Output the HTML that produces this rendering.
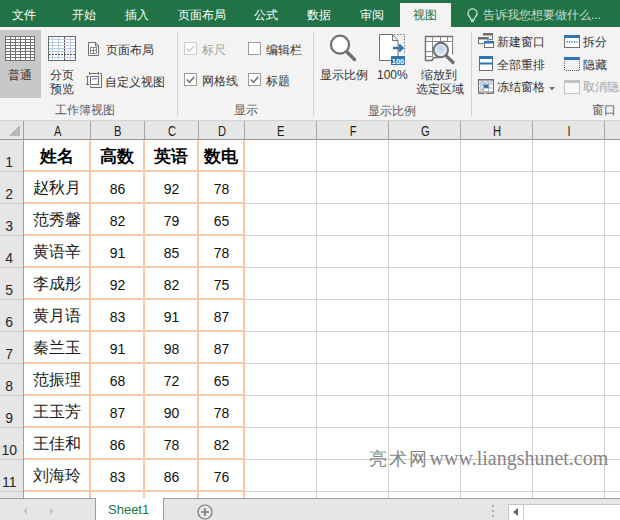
<!DOCTYPE html><html><head><meta charset="utf-8"><style>
*{margin:0;padding:0;box-sizing:border-box}
html,body{width:620px;height:520px;overflow:hidden;background:#fff;font-family:"Liberation Sans",sans-serif;position:relative}
.abs{position:absolute;white-space:nowrap}
svg{position:absolute;overflow:visible}
.tab{position:absolute;top:8px;font-size:12px;color:#fff;line-height:14px;white-space:nowrap}
.rl{position:absolute;font-size:12px;color:#333;line-height:14px;white-space:nowrap}
.gl{position:absolute;font-size:12px;color:#5e5e5e;line-height:14px;white-space:nowrap}
.sep{position:absolute;top:32px;width:1px;height:84px;background:#d2d2d2}
.cb{position:absolute;width:13px;height:13px;border:1px solid #9c9c9c;background:#fff}
.cell{position:absolute;text-align:center;line-height:32px;color:#000}
</style></head><body>
<div class="abs" style="left:0;top:0;width:620px;height:27px;background:#217346"></div>
<div class="tab" style="left:12px">文件</div>
<div class="tab" style="left:72px">开始</div>
<div class="tab" style="left:125px">插入</div>
<div class="tab" style="left:178px">页面布局</div>
<div class="tab" style="left:254px">公式</div>
<div class="tab" style="left:307px">数据</div>
<div class="tab" style="left:360px">审阅</div>
<div class="abs" style="left:400px;top:3px;width:51px;height:25px;background:#f3f3f3"></div>
<div class="tab" style="left:413px;color:#217346">视图</div>
<svg style="left:467px;top:8px" width="11" height="14" viewBox="0 0 11 14"><path d="M5.5 0.8a4.6 4.6 0 0 0-2.8 8.2c.5.4.8 1 .8 1.6v.6h4v-.6c0-.6.3-1.2.8-1.6A4.6 4.6 0 0 0 5.5 0.8z" fill="none" stroke="#cfe2d6" stroke-width="1.1"/><path d="M3.6 12.3h3.8M4 13.6h3" stroke="#cfe2d6" stroke-width="1"/></svg>
<div class="tab" style="left:483px;color:#c9ddd0">告诉我您想要做什么...</div>
<div class="abs" style="left:0;top:27px;width:620px;height:93px;background:#f3f3f3"></div>
<div class="abs" style="left:0;top:30px;width:41px;height:68px;background:#c8c8c8"></div>
<svg style="left:5px;top:36px" width="30" height="25"><rect x="0" y="0" width="30" height="25" fill="#707070"/><rect x="1" y="1" width="4" height="2" fill="#fff"/><rect x="1" y="4" width="4" height="2" fill="#fff"/><rect x="1" y="7" width="4" height="2" fill="#fff"/><rect x="1" y="10" width="4" height="2" fill="#fff"/><rect x="1" y="13" width="4" height="2" fill="#fff"/><rect x="1" y="16" width="4" height="2" fill="#fff"/><rect x="1" y="19" width="4" height="2" fill="#fff"/><rect x="1" y="22" width="4" height="2" fill="#fff"/><rect x="6" y="1" width="4" height="2" fill="#fff"/><rect x="6" y="4" width="4" height="2" fill="#fff"/><rect x="6" y="7" width="4" height="2" fill="#fff"/><rect x="6" y="10" width="4" height="2" fill="#fff"/><rect x="6" y="13" width="4" height="2" fill="#fff"/><rect x="6" y="16" width="4" height="2" fill="#fff"/><rect x="6" y="19" width="4" height="2" fill="#fff"/><rect x="6" y="22" width="4" height="2" fill="#fff"/><rect x="11" y="1" width="4" height="2" fill="#fff"/><rect x="11" y="4" width="4" height="2" fill="#fff"/><rect x="11" y="7" width="4" height="2" fill="#fff"/><rect x="11" y="10" width="4" height="2" fill="#fff"/><rect x="11" y="13" width="4" height="2" fill="#fff"/><rect x="11" y="16" width="4" height="2" fill="#fff"/><rect x="11" y="19" width="4" height="2" fill="#fff"/><rect x="11" y="22" width="4" height="2" fill="#fff"/><rect x="16" y="1" width="4" height="2" fill="#fff"/><rect x="16" y="4" width="4" height="2" fill="#fff"/><rect x="16" y="7" width="4" height="2" fill="#fff"/><rect x="16" y="10" width="4" height="2" fill="#fff"/><rect x="16" y="13" width="4" height="2" fill="#fff"/><rect x="16" y="16" width="4" height="2" fill="#fff"/><rect x="16" y="19" width="4" height="2" fill="#fff"/><rect x="16" y="22" width="4" height="2" fill="#fff"/><rect x="21" y="1" width="4" height="2" fill="#fff"/><rect x="21" y="4" width="4" height="2" fill="#fff"/><rect x="21" y="7" width="4" height="2" fill="#fff"/><rect x="21" y="10" width="4" height="2" fill="#fff"/><rect x="21" y="13" width="4" height="2" fill="#fff"/><rect x="21" y="16" width="4" height="2" fill="#fff"/><rect x="21" y="19" width="4" height="2" fill="#fff"/><rect x="21" y="22" width="4" height="2" fill="#fff"/><rect x="26" y="1" width="3" height="2" fill="#fff"/><rect x="26" y="4" width="3" height="2" fill="#fff"/><rect x="26" y="7" width="3" height="2" fill="#fff"/><rect x="26" y="10" width="3" height="2" fill="#fff"/><rect x="26" y="13" width="3" height="2" fill="#fff"/><rect x="26" y="16" width="3" height="2" fill="#fff"/><rect x="26" y="19" width="3" height="2" fill="#fff"/><rect x="26" y="22" width="3" height="2" fill="#fff"/></svg>
<svg style="left:48px;top:36px" width="28" height="25"><rect x="0.5" y="0.5" width="27" height="24" fill="#fff" stroke="#6a6a6a"/><line x1="1" y1="3.5" x2="27" y2="3.5" stroke="#bccbe6"/><line x1="1" y1="6.5" x2="27" y2="6.5" stroke="#bccbe6"/><line x1="1" y1="9.5" x2="27" y2="9.5" stroke="#bccbe6"/><line x1="1" y1="12.5" x2="27" y2="12.5" stroke="#bccbe6"/><line x1="1" y1="15.5" x2="27" y2="15.5" stroke="#bccbe6"/><line x1="1" y1="21.5" x2="27" y2="21.5" stroke="#bccbe6"/><line x1="4.5" y1="1" x2="4.5" y2="24" stroke="#bccbe6"/><line x1="10.5" y1="1" x2="10.5" y2="24" stroke="#bccbe6"/><line x1="22.5" y1="1" x2="22.5" y2="24" stroke="#bccbe6"/><line x1="16.5" y1="1" x2="16.5" y2="24" stroke="#555" stroke-dasharray="2 1"/><line x1="1" y1="18.5" x2="27" y2="18.5" stroke="#555" stroke-dasharray="2 1"/></svg>
<div class="rl" style="left:8px;top:68px">普通</div>
<div class="rl" style="left:50px;top:68px">分页</div>
<div class="rl" style="left:50px;top:82px">预览</div>
<svg style="left:88px;top:42px" width="11" height="14"><path d="M0.5 0.5h7l3 3.5v9.5h-10z" fill="#fff" stroke="#6f6f6f"/><path d="M7.5 0.5v3.5h3" fill="none" stroke="#6f6f6f"/><rect x="2.5" y="5.5" width="6" height="6" fill="none" stroke="#8a8a8a"/><path d="M5.5 5.5v6M2.5 8.5h6" stroke="#8a8a8a"/></svg>
<div class="rl" style="left:106px;top:43px">页面布局</div>
<svg style="left:86px;top:72px" width="17" height="17"><path d="M3.5 0v3M3.5 1.5h9M12.5 0v3M0 4.5h3M1.5 4.5v8M0 12.5h3" stroke="#6f6f6f" fill="none"/><rect x="4.5" y="4.5" width="8" height="8" fill="#fff" stroke="#6f6f6f"/><rect x="6" y="6" width="5" height="1.6" fill="#8fb0da"/><path d="M14 1.5h1.5v14h-11v-1.5" stroke="#6f6f6f" fill="none"/></svg>
<div class="rl" style="left:105px;top:75px">自定义视图</div>
<div class="gl" style="left:55px;top:103px">工作簿视图</div>
<div class="sep" style="left:177px"></div>
<div class="cb" style="left:184px;top:42px;border-color:#cdcdcd"></div>
<svg style="left:184px;top:42px" width="13" height="13"><path d="M2.8 6.6l2.6 2.7 5-5.6" fill="none" stroke="#cdcdcd" stroke-width="1.5"/></svg>
<div class="rl" style="left:202px;top:43px;color:#9e9e9e">标尺</div>
<div class="cb" style="left:248px;top:42px"></div>
<div class="rl" style="left:266px;top:43px">编辑栏</div>
<div class="cb" style="left:184px;top:73px"></div>
<svg style="left:184px;top:73px" width="13" height="13"><path d="M2.8 6.6l2.6 2.7 5-5.6" fill="none" stroke="#707070" stroke-width="1.5"/></svg>
<div class="rl" style="left:202px;top:74px">网格线</div>
<div class="cb" style="left:248px;top:73px"></div>
<svg style="left:248px;top:73px" width="13" height="13"><path d="M2.8 6.6l2.6 2.7 5-5.6" fill="none" stroke="#707070" stroke-width="1.5"/></svg>
<div class="rl" style="left:266px;top:74px">标题</div>
<div class="gl" style="left:234px;top:103px">显示</div>
<div class="sep" style="left:313px"></div>
<svg style="left:328px;top:33px" width="31" height="30"><circle cx="12" cy="11.7" r="9" fill="#fff" stroke="#6f6f6f" stroke-width="2.2"/><path d="M19 19l7.5 7.5" stroke="#6f6f6f" stroke-width="3.4" stroke-linecap="round"/></svg>
<div class="rl" style="left:320px;top:68px">显示比例</div>
<svg style="left:379px;top:34px" width="27" height="31"><path d="M0.5 0.5h13l5.5 6v20h-18.5z" fill="#fff" stroke="#6f6f6f"/><path d="M13.5 0.5v6h5.5" fill="none" stroke="#6f6f6f"/><path d="M15 0.5h10.5v20" fill="none" stroke="#777" stroke-dasharray="1.5 1.5"/><path d="M14 14h9M20 10.5l3.5 3.5-3.5 3.5" fill="none" stroke="#2e75b6" stroke-width="2.4"/><rect x="12" y="22" width="14" height="9" fill="#2e75b6"/><text x="19" y="29.5" font-size="7.5" fill="#fff" text-anchor="middle" font-family="Liberation Sans" font-weight="bold">100</text></svg>
<div class="rl" style="left:377px;top:68px">100%</div>
<svg style="left:425px;top:36px" width="31" height="28"><path d="M0.5 0.5h27v18M0.5 0.5v24h6l2-3h6" fill="#fff" stroke="#6f6f6f" stroke-width="1.2"/><rect x="1" y="1" width="26" height="20" fill="#fff"/><path d="M0.5 0.5h27.5M0.5 0.5v24.5M0.5 24.5h6.5l2-3h5" fill="none" stroke="#6f6f6f" stroke-width="1.3"/><path d="M1 5.5h26M1 15.5h6M1 20.5h6M7.5 1v20M15.5 1v4M22.5 1v4M27.5 1v13" stroke="#8a8a8a"/><defs><radialGradient id="zg" cx="0.5" cy="0.4" r="0.6"><stop offset="0" stop-color="#b7cde6"/><stop offset="1" stop-color="#f4f8fc"/></radialGradient></defs><circle cx="15.8" cy="14" r="7.2" fill="url(#zg)" stroke="#6f6f6f" stroke-width="2"/><path d="M21 19.5l7 7" stroke="#6f6f6f" stroke-width="3.2" stroke-linecap="round"/></svg>
<div class="rl" style="left:421px;top:68px">缩放到</div>
<div class="rl" style="left:416px;top:82px">选定区域</div>
<div class="gl" style="left:368px;top:104px">显示比例</div>
<div class="sep" style="left:471px"></div>
<svg style="left:478px;top:33px" width="16" height="15"><rect x="5" y="0" width="10" height="2.5" fill="#6f6f6f"/><path d="M14.5 2.5v4h-3.5" fill="none" stroke="#6f6f6f"/><rect x="0.5" y="4.5" width="9.5" height="6" fill="#fff" stroke="#6f6f6f"/><rect x="0" y="4" width="10.5" height="2.5" fill="#6f6f6f"/><rect x="6.5" y="8.5" width="9" height="6" fill="#fff" stroke="#6f6f6f"/><rect x="6" y="8" width="10" height="2.5" fill="#2e75b6"/></svg>
<div class="rl" style="left:497px;top:35px">新建窗口</div>
<svg style="left:479px;top:56px" width="14" height="15"><rect x="0.5" y="0.5" width="13" height="14" fill="#fff" stroke="#6f6f6f"/><rect x="0" y="0" width="14" height="3" fill="#2e75b6"/><rect x="0" y="6.5" width="14" height="2" fill="#2e75b6"/></svg>
<div class="rl" style="left:497px;top:58px">全部重排</div>
<svg style="left:478px;top:79px" width="16" height="15"><rect x="0.5" y="0.5" width="15" height="12.5" fill="#fff" stroke="#6f6f6f"/><rect x="0" y="0" width="16" height="1.6" fill="#6f6f6f"/><path d="M5.5 1v12M10.5 1v12M1 5h14M1 9h14" stroke="#b4b4b4"/><path d="M0.5 13v1.5h6M8.5 14.5h7v-1.5" fill="none" stroke="#6f6f6f"/><path d="M1.8 4.2q1.5 -1.6 3.2 -1.4" stroke="#7fa6d6" fill="none" stroke-width="1.1"/><path d="M6.8 4.2q1.5 -1.6 3.2 -1.4" stroke="#7fa6d6" fill="none" stroke-width="1.1"/><path d="M11.8 4.2q1.5 -1.6 3.2 -1.4" stroke="#7fa6d6" fill="none" stroke-width="1.1"/><path d="M1.8 7.7q1.5 -1.6 3.2 -1.4" stroke="#7fa6d6" fill="none" stroke-width="1.1"/><path d="M1.8 11.7q1.5 -1.6 3.2 -1.4" stroke="#7fa6d6" fill="none" stroke-width="1.1"/><rect x="6" y="5.5" width="4.5" height="3.5" fill="#2e75b6"/></svg>
<div class="rl" style="left:497px;top:80px">冻结窗格</div>
<svg style="left:549px;top:87px" width="7" height="4"><path d="M0 0h6l-3 3.5z" fill="#777"/></svg>
<svg style="left:564px;top:35px" width="16" height="13"><rect x="0.5" y="0.5" width="15" height="12" fill="#fff" stroke="#6f6f6f"/><rect x="0" y="0" width="16" height="3" fill="#2e75b6"/><path d="M2.5 7h11" stroke="#2e75b6" stroke-width="1.3" stroke-dasharray="1.3 1.2"/></svg>
<div class="rl" style="left:583px;top:35px">拆分</div>
<svg style="left:564px;top:57px" width="16" height="14"><rect x="0" y="0" width="16" height="3" fill="#2e75b6"/><rect x="0" y="4" width="1" height="1" fill="#555"/><rect x="15" y="4" width="1" height="1" fill="#555"/><rect x="0" y="6" width="1" height="1" fill="#555"/><rect x="15" y="6" width="1" height="1" fill="#555"/><rect x="0" y="8" width="1" height="1" fill="#555"/><rect x="15" y="8" width="1" height="1" fill="#555"/><rect x="0" y="10" width="1" height="1" fill="#555"/><rect x="15" y="10" width="1" height="1" fill="#555"/><rect x="0" y="12" width="1" height="1" fill="#555"/><rect x="15" y="12" width="1" height="1" fill="#555"/><rect x="2" y="13" width="1" height="1" fill="#555"/><rect x="4" y="13" width="1" height="1" fill="#555"/><rect x="6" y="13" width="1" height="1" fill="#555"/><rect x="8" y="13" width="1" height="1" fill="#555"/><rect x="10" y="13" width="1" height="1" fill="#555"/><rect x="12" y="13" width="1" height="1" fill="#555"/><rect x="14" y="13" width="1" height="1" fill="#555"/></svg>
<div class="rl" style="left:583px;top:58px">隐藏</div>
<svg style="left:564px;top:80px" width="16" height="14"><rect x="0.5" y="0.5" width="15" height="13" fill="#f8f8f8" stroke="#c4c4c4"/><rect x="0" y="0" width="16" height="3" fill="#c4c4c4"/></svg>
<div class="rl" style="left:583px;top:80px;color:#a4a4a4">取消隐藏</div>
<div class="gl" style="left:592px;top:103px">窗口</div>
<div class="abs" style="left:0;top:120px;width:620px;height:20px;background:#e6e6e6;border-top:1px solid #d4d4d4"></div>
<div class="abs" style="left:0;top:139px;width:620px;height:1px;background:#979797"></div>
<div class="abs" style="left:0;top:140px;width:23px;height:358px;background:#e6e6e6"></div>
<div class="abs" style="left:23px;top:121px;width:1px;height:377px;background:#a0a0a0"></div>
<svg style="left:9px;top:125px" width="12" height="11"><path d="M11 0v11h-11z" fill="#b7b7b7"/></svg>
<div class="abs" style="left:90px;top:121px;width:1px;height:18px;background:#a6a6a6"></div>
<div class="abs" style="left:90px;top:140px;width:1px;height:358px;background:#d2d2d2"></div>
<div class="abs" style="left:24px;top:122px;width:67px;text-align:center;font-size:14px;line-height:18px;color:#1e1e1e"><span style="display:inline-block;transform:scaleX(.8)">A</span></div>
<div class="abs" style="left:144px;top:121px;width:1px;height:18px;background:#a6a6a6"></div>
<div class="abs" style="left:144px;top:140px;width:1px;height:358px;background:#d2d2d2"></div>
<div class="abs" style="left:91px;top:122px;width:54px;text-align:center;font-size:14px;line-height:18px;color:#1e1e1e"><span style="display:inline-block;transform:scaleX(.8)">B</span></div>
<div class="abs" style="left:198px;top:121px;width:1px;height:18px;background:#a6a6a6"></div>
<div class="abs" style="left:198px;top:140px;width:1px;height:358px;background:#d2d2d2"></div>
<div class="abs" style="left:145px;top:122px;width:54px;text-align:center;font-size:14px;line-height:18px;color:#1e1e1e"><span style="display:inline-block;transform:scaleX(.8)">C</span></div>
<div class="abs" style="left:244px;top:121px;width:1px;height:18px;background:#a6a6a6"></div>
<div class="abs" style="left:244px;top:140px;width:1px;height:358px;background:#d2d2d2"></div>
<div class="abs" style="left:199px;top:122px;width:46px;text-align:center;font-size:14px;line-height:18px;color:#1e1e1e"><span style="display:inline-block;transform:scaleX(.8)">D</span></div>
<div class="abs" style="left:316px;top:121px;width:1px;height:18px;background:#a6a6a6"></div>
<div class="abs" style="left:316px;top:140px;width:1px;height:358px;background:#d2d2d2"></div>
<div class="abs" style="left:245px;top:122px;width:72px;text-align:center;font-size:14px;line-height:18px;color:#1e1e1e"><span style="display:inline-block;transform:scaleX(.8)">E</span></div>
<div class="abs" style="left:388px;top:121px;width:1px;height:18px;background:#a6a6a6"></div>
<div class="abs" style="left:388px;top:140px;width:1px;height:358px;background:#d2d2d2"></div>
<div class="abs" style="left:317px;top:122px;width:72px;text-align:center;font-size:14px;line-height:18px;color:#1e1e1e"><span style="display:inline-block;transform:scaleX(.8)">F</span></div>
<div class="abs" style="left:460px;top:121px;width:1px;height:18px;background:#a6a6a6"></div>
<div class="abs" style="left:460px;top:140px;width:1px;height:358px;background:#d2d2d2"></div>
<div class="abs" style="left:389px;top:122px;width:72px;text-align:center;font-size:14px;line-height:18px;color:#1e1e1e"><span style="display:inline-block;transform:scaleX(.8)">G</span></div>
<div class="abs" style="left:532px;top:121px;width:1px;height:18px;background:#a6a6a6"></div>
<div class="abs" style="left:532px;top:140px;width:1px;height:358px;background:#d2d2d2"></div>
<div class="abs" style="left:461px;top:122px;width:72px;text-align:center;font-size:14px;line-height:18px;color:#1e1e1e"><span style="display:inline-block;transform:scaleX(.8)">H</span></div>
<div class="abs" style="left:604px;top:121px;width:1px;height:18px;background:#a6a6a6"></div>
<div class="abs" style="left:604px;top:140px;width:1px;height:358px;background:#d2d2d2"></div>
<div class="abs" style="left:533px;top:122px;width:72px;text-align:center;font-size:14px;line-height:18px;color:#1e1e1e"><span style="display:inline-block;transform:scaleX(.8)">I</span></div>
<div class="abs" style="left:24px;top:171px;width:596px;height:1px;background:#d2d2d2"></div>
<div class="abs" style="left:0;top:171px;width:23px;height:1px;background:#cacaca"></div>
<div class="abs" style="left:0;top:140px;width:18.5px;text-align:center;font-size:14px;line-height:44px;color:#262626">1</div>
<div class="abs" style="left:24px;top:203px;width:596px;height:1px;background:#d2d2d2"></div>
<div class="abs" style="left:0;top:203px;width:23px;height:1px;background:#cacaca"></div>
<div class="abs" style="left:0;top:172px;width:18.5px;text-align:center;font-size:14px;line-height:44px;color:#262626">2</div>
<div class="abs" style="left:24px;top:235px;width:596px;height:1px;background:#d2d2d2"></div>
<div class="abs" style="left:0;top:235px;width:23px;height:1px;background:#cacaca"></div>
<div class="abs" style="left:0;top:204px;width:18.5px;text-align:center;font-size:14px;line-height:44px;color:#262626">3</div>
<div class="abs" style="left:24px;top:267px;width:596px;height:1px;background:#d2d2d2"></div>
<div class="abs" style="left:0;top:267px;width:23px;height:1px;background:#cacaca"></div>
<div class="abs" style="left:0;top:236px;width:18.5px;text-align:center;font-size:14px;line-height:44px;color:#262626">4</div>
<div class="abs" style="left:24px;top:299px;width:596px;height:1px;background:#d2d2d2"></div>
<div class="abs" style="left:0;top:299px;width:23px;height:1px;background:#cacaca"></div>
<div class="abs" style="left:0;top:268px;width:18.5px;text-align:center;font-size:14px;line-height:44px;color:#262626">5</div>
<div class="abs" style="left:24px;top:331px;width:596px;height:1px;background:#d2d2d2"></div>
<div class="abs" style="left:0;top:331px;width:23px;height:1px;background:#cacaca"></div>
<div class="abs" style="left:0;top:300px;width:18.5px;text-align:center;font-size:14px;line-height:44px;color:#262626">6</div>
<div class="abs" style="left:24px;top:363px;width:596px;height:1px;background:#d2d2d2"></div>
<div class="abs" style="left:0;top:363px;width:23px;height:1px;background:#cacaca"></div>
<div class="abs" style="left:0;top:332px;width:18.5px;text-align:center;font-size:14px;line-height:44px;color:#262626">7</div>
<div class="abs" style="left:24px;top:395px;width:596px;height:1px;background:#d2d2d2"></div>
<div class="abs" style="left:0;top:395px;width:23px;height:1px;background:#cacaca"></div>
<div class="abs" style="left:0;top:364px;width:18.5px;text-align:center;font-size:14px;line-height:44px;color:#262626">8</div>
<div class="abs" style="left:24px;top:427px;width:596px;height:1px;background:#d2d2d2"></div>
<div class="abs" style="left:0;top:427px;width:23px;height:1px;background:#cacaca"></div>
<div class="abs" style="left:0;top:396px;width:18.5px;text-align:center;font-size:14px;line-height:44px;color:#262626">9</div>
<div class="abs" style="left:24px;top:459px;width:596px;height:1px;background:#d2d2d2"></div>
<div class="abs" style="left:0;top:459px;width:23px;height:1px;background:#cacaca"></div>
<div class="abs" style="left:0;top:428px;width:18.5px;text-align:center;font-size:14px;line-height:44px;color:#262626">10</div>
<div class="abs" style="left:24px;top:491px;width:596px;height:1px;background:#d2d2d2"></div>
<div class="abs" style="left:0;top:491px;width:23px;height:1px;background:#cacaca"></div>
<div class="abs" style="left:0;top:460px;width:18.5px;text-align:center;font-size:14px;line-height:44px;color:#262626">11</div>
<div class="abs" style="left:24px;top:523px;width:596px;height:1px;background:#d2d2d2"></div>
<div class="abs" style="left:0;top:523px;width:23px;height:1px;background:#cacaca"></div>
<div class="cell" style="left:24px;width:66px;height:31px;font-size:17px;font-weight:bold;top:141px">姓名</div>
<div class="cell" style="left:89px;width:55px;height:31px;font-size:17px;font-weight:bold;top:141px">高数</div>
<div class="cell" style="left:143px;width:55px;height:31px;font-size:17px;font-weight:bold;top:141px">英语</div>
<div class="cell" style="left:197px;width:47px;height:31px;font-size:17px;font-weight:bold;top:141px">数电</div>
<div class="cell" style="left:24px;width:66px;height:31px;font-size:16px;color:#1a1a1a;top:172px">赵秋月</div>
<div class="cell" style="left:91px;width:53px;height:31px;font-size:14px;color:#111;top:173px">86</div>
<div class="cell" style="left:145px;width:53px;height:31px;font-size:14px;color:#111;top:173px">92</div>
<div class="cell" style="left:199px;width:45px;height:31px;font-size:14px;color:#111;top:173px">78</div>
<div class="cell" style="left:24px;width:66px;height:31px;font-size:16px;color:#1a1a1a;top:204px">范秀馨</div>
<div class="cell" style="left:91px;width:53px;height:31px;font-size:14px;color:#111;top:205px">82</div>
<div class="cell" style="left:145px;width:53px;height:31px;font-size:14px;color:#111;top:205px">79</div>
<div class="cell" style="left:199px;width:45px;height:31px;font-size:14px;color:#111;top:205px">65</div>
<div class="cell" style="left:24px;width:66px;height:31px;font-size:16px;color:#1a1a1a;top:236px">黄语辛</div>
<div class="cell" style="left:91px;width:53px;height:31px;font-size:14px;color:#111;top:237px">91</div>
<div class="cell" style="left:145px;width:53px;height:31px;font-size:14px;color:#111;top:237px">85</div>
<div class="cell" style="left:199px;width:45px;height:31px;font-size:14px;color:#111;top:237px">78</div>
<div class="cell" style="left:24px;width:66px;height:31px;font-size:16px;color:#1a1a1a;top:268px">李成彤</div>
<div class="cell" style="left:91px;width:53px;height:31px;font-size:14px;color:#111;top:269px">92</div>
<div class="cell" style="left:145px;width:53px;height:31px;font-size:14px;color:#111;top:269px">82</div>
<div class="cell" style="left:199px;width:45px;height:31px;font-size:14px;color:#111;top:269px">75</div>
<div class="cell" style="left:24px;width:66px;height:31px;font-size:16px;color:#1a1a1a;top:300px">黄月语</div>
<div class="cell" style="left:91px;width:53px;height:31px;font-size:14px;color:#111;top:301px">83</div>
<div class="cell" style="left:145px;width:53px;height:31px;font-size:14px;color:#111;top:301px">91</div>
<div class="cell" style="left:199px;width:45px;height:31px;font-size:14px;color:#111;top:301px">87</div>
<div class="cell" style="left:24px;width:66px;height:31px;font-size:16px;color:#1a1a1a;top:332px">秦兰玉</div>
<div class="cell" style="left:91px;width:53px;height:31px;font-size:14px;color:#111;top:333px">91</div>
<div class="cell" style="left:145px;width:53px;height:31px;font-size:14px;color:#111;top:333px">98</div>
<div class="cell" style="left:199px;width:45px;height:31px;font-size:14px;color:#111;top:333px">87</div>
<div class="cell" style="left:24px;width:66px;height:31px;font-size:16px;color:#1a1a1a;top:364px">范振理</div>
<div class="cell" style="left:91px;width:53px;height:31px;font-size:14px;color:#111;top:365px">68</div>
<div class="cell" style="left:145px;width:53px;height:31px;font-size:14px;color:#111;top:365px">72</div>
<div class="cell" style="left:199px;width:45px;height:31px;font-size:14px;color:#111;top:365px">65</div>
<div class="cell" style="left:24px;width:66px;height:31px;font-size:16px;color:#1a1a1a;top:396px">王玉芳</div>
<div class="cell" style="left:91px;width:53px;height:31px;font-size:14px;color:#111;top:397px">87</div>
<div class="cell" style="left:145px;width:53px;height:31px;font-size:14px;color:#111;top:397px">90</div>
<div class="cell" style="left:199px;width:45px;height:31px;font-size:14px;color:#111;top:397px">78</div>
<div class="cell" style="left:24px;width:66px;height:31px;font-size:16px;color:#1a1a1a;top:428px">王佳和</div>
<div class="cell" style="left:91px;width:53px;height:31px;font-size:14px;color:#111;top:429px">86</div>
<div class="cell" style="left:145px;width:53px;height:31px;font-size:14px;color:#111;top:429px">78</div>
<div class="cell" style="left:199px;width:45px;height:31px;font-size:14px;color:#111;top:429px">82</div>
<div class="cell" style="left:24px;width:66px;height:31px;font-size:16px;color:#1a1a1a;top:460px">刘海玲</div>
<div class="cell" style="left:91px;width:53px;height:31px;font-size:14px;color:#111;top:461px">83</div>
<div class="cell" style="left:145px;width:53px;height:31px;font-size:14px;color:#111;top:461px">86</div>
<div class="cell" style="left:199px;width:45px;height:31px;font-size:14px;color:#111;top:461px">76</div>
<div class="abs" style="left:89px;top:140px;width:2px;height:358px;background:#f8c9a7"></div>
<div class="abs" style="left:143px;top:140px;width:2px;height:358px;background:#f8c9a7"></div>
<div class="abs" style="left:197px;top:140px;width:2px;height:358px;background:#f8c9a7"></div>
<div class="abs" style="left:243px;top:140px;width:2px;height:358px;background:#f8c9a7"></div>
<div class="abs" style="left:24px;top:170px;width:221px;height:2px;background:#f8c9a7"></div>
<div class="abs" style="left:24px;top:202px;width:221px;height:2px;background:#f8c9a7"></div>
<div class="abs" style="left:24px;top:234px;width:221px;height:2px;background:#f8c9a7"></div>
<div class="abs" style="left:24px;top:266px;width:221px;height:2px;background:#f8c9a7"></div>
<div class="abs" style="left:24px;top:298px;width:221px;height:2px;background:#f8c9a7"></div>
<div class="abs" style="left:24px;top:330px;width:221px;height:2px;background:#f8c9a7"></div>
<div class="abs" style="left:24px;top:362px;width:221px;height:2px;background:#f8c9a7"></div>
<div class="abs" style="left:24px;top:394px;width:221px;height:2px;background:#f8c9a7"></div>
<div class="abs" style="left:24px;top:426px;width:221px;height:2px;background:#f8c9a7"></div>
<div class="abs" style="left:24px;top:458px;width:221px;height:2px;background:#f8c9a7"></div>
<div class="abs" style="left:24px;top:490px;width:221px;height:2px;background:#f8c9a7"></div>
<div class="abs" style="left:24px;top:522px;width:221px;height:2px;background:#f8c9a7"></div>
<div class="abs" style="left:369px;top:446px;font-family:'Liberation Serif',serif;font-size:20px;color:#858585;line-height:24px"><span style="font-size:18px;letter-spacing:2.2px">亮术网</span>www.liangshunet.com</div>
<div class="abs" style="left:0;top:498px;width:620px;height:22px;background:#e6e6e6;border-top:1px solid #9d9d9d"></div>
<svg style="left:20px;top:506px" width="40" height="10"><path d="M7 1v8l-4-4z" fill="#c8c8c8"/><path d="M30 1v8l4-4z" fill="#c8c8c8"/></svg>
<div class="abs" style="left:95px;top:498px;width:69px;height:22px;background:#fff;border-left:1px solid #9d9d9d;border-right:1px solid #9d9d9d"></div>
<div class="abs" style="left:108px;top:502px;font-size:13px;color:#217346;line-height:16px">Sheet1</div>
<svg style="left:197px;top:504px" width="16" height="16"><circle cx="8" cy="8" r="7" fill="none" stroke="#777" stroke-width="1.2"/><path d="M8 4v8M4 8h8" stroke="#777" stroke-width="1.6"/></svg>
<svg style="left:491px;top:504px" width="4" height="16"><rect x="1" y="1" width="2" height="2" fill="#aaa"/><rect x="1" y="6" width="2" height="2" fill="#aaa"/><rect x="1" y="11" width="2" height="2" fill="#aaa"/></svg>
<div class="abs" style="left:508px;top:504px;width:16px;height:17px;background:#fff;border:1px solid #c6c6c6"></div>
<svg style="left:512px;top:507px" width="8" height="10"><path d="M6 1v8l-5-4z" fill="#666"/></svg>
<div class="abs" style="left:523px;top:504px;width:100px;height:17px;background:#fff;border:1px solid #c6c6c6"></div>
</body></html>
